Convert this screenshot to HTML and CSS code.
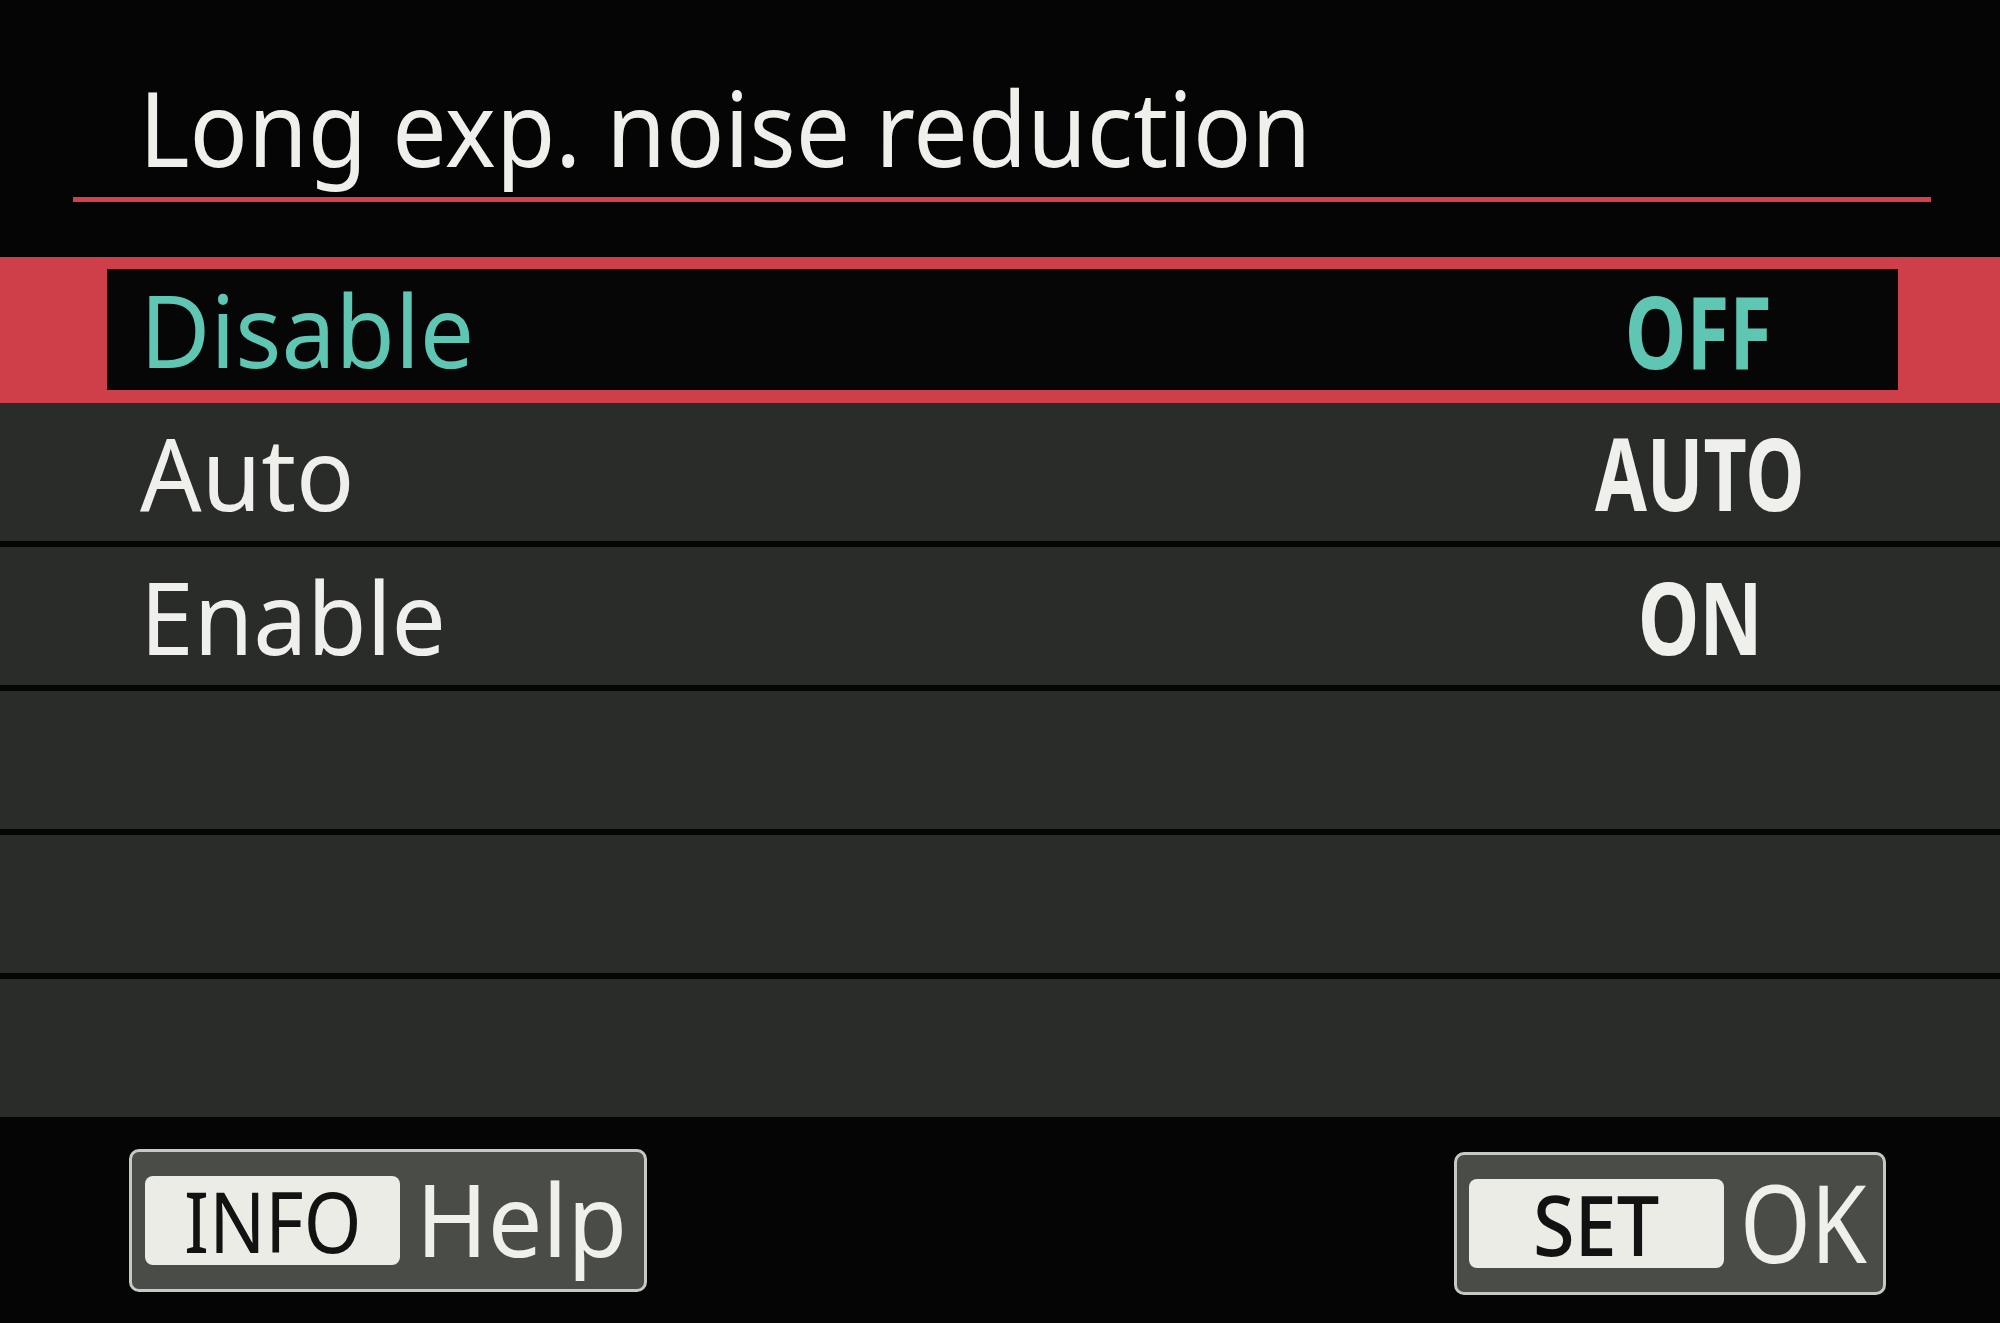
FILE: index.html
```html
<!DOCTYPE html>
<html lang="en">
<head>
<meta charset="utf-8">
<title>Long exp. noise reduction</title>
<link rel="stylesheet" href="styles.css">
</head>
<body>
<div class="screen">
  <header class="header">
    <h1 class="title"><span class="title-text">Long exp. noise reduction</span></h1>
    <div class="rule"></div>
  </header>
  <ul class="menu">
    <li class="row row-selected"><div class="row-inner"><span class="label">Disable</span><span class="value"><span class="value-text">OFF</span></span></div></li>
    <li class="row"><div class="row-inner"><span class="label">Auto</span><span class="value"><span class="value-text value-narrow">AUTO</span></span></div></li>
    <li class="row"><div class="row-inner"><span class="label">Enable</span><span class="value"><span class="value-text">ON</span></span></div></li>
    <li class="row"></li>
    <li class="row"></li>
    <li class="row"></li>
  </ul>
  <footer class="footer">
    <div class="btn btn-info"><span class="key"><span class="key-text">INFO</span></span><span class="btn-label">Help</span></div>
    <div class="btn btn-set"><span class="key"><span class="key-text key-set">SET</span></span><span class="btn-label btn-ok">OK</span></div>
  </footer>
</div>
</body>
</html>
```
FILE: styles.css
```css
html, body {
  margin: 0;
  padding: 0;
  background: #050505;
}
body {
  width: 2000px;
  height: 1323px;
  overflow: hidden;
  font-family: "Noto Sans", "Open Sans", sans-serif;
  color: #efefeb;
}
.screen {
  display: flex;
  flex-direction: column;
  height: 1323px;
}
.header {
  height: 257px;
  display: flex;
  flex-direction: column;
  flex-shrink: 0;
}
.title {
  margin: 74px 0 0 139px;
  font-size: 105px;
  line-height: 105px;
  font-weight: 400;
  white-space: nowrap;
}
.title-text {
  display: inline-block;
  transform: scaleX(0.92);
  transform-origin: left center;
}
.rule {
  margin: 18px 0 0 73px;
  width: 1858px;
  height: 5px;
  background: #d4404c;
}
.menu {
  list-style: none;
  margin: 0;
  padding: 0;
  display: flex;
  flex-direction: column;
  flex-shrink: 0;
}
.row {
  height: 138px;
  margin-bottom: 6px;
  background: #2a2c2a;
  display: flex;
}
.row:last-child {
  margin-bottom: 0;
}
.row-selected {
  height: 146px;
  margin-bottom: 0;
  box-sizing: border-box;
  padding: 12px 102px 13px 107px;
  background: #cf3f4a;
}
.row-inner {
  flex: 1;
  display: grid;
  grid-template-columns: 1fr 400px;
  align-items: center;
  padding: 0 100px 0 140px;
}
.row-selected .row-inner {
  background: #060606;
  padding: 0 0 0 33px;
  color: #5ec6b2;
}
.label {
  justify-self: start;
  display: inline-block;
  font-size: 101px;
  line-height: 1;
  white-space: nowrap;
  transform: scaleX(0.955);
  transform-origin: left center;
}
.value {
  text-align: center;
  font-size: 100px;
  line-height: 1;
  font-weight: 700;
}
.value-text {
  display: inline-block;
  transform: scaleX(0.78);
  transform-origin: center center;
}
.value-narrow {
  transform: scaleX(0.75);
}
.footer {
  flex: 1;
  display: flex;
  justify-content: space-between;
  align-items: flex-start;
  padding: 32px 114px 0 129px;
}
.btn {
  height: 143px;
  box-sizing: border-box;
  border: 3px solid #c6cac2;
  border-radius: 10px;
  background: #4a4c48;
  display: flex;
  align-items: center;
}
.btn-info {
  width: 518px;
  padding-left: 13px;
  gap: 16px;
}
.btn-set {
  width: 432px;
  margin-top: 3px;
  padding-left: 12px;
  gap: 16px;
}
.key {
  width: 255px;
  height: 89px;
  flex-shrink: 0;
  border-radius: 8px;
  background: #ecece6;
  color: #121212;
  display: flex;
  align-items: center;
  justify-content: center;
  font-size: 84px;
  line-height: 1;
}
.key-text {
  display: inline-block;
  transform: scaleX(0.88);
}
.key-set {
  font-weight: 500;
  transform: scaleX(0.9);
}
.btn-label {
  display: inline-block;
  font-size: 101px;
  line-height: 1;
  margin-top: -4px;
  transform: scaleX(0.96);
  transform-origin: left center;
}
.btn-ok {
  font-size: 108px;
  transform: scaleX(0.84);
}
```
